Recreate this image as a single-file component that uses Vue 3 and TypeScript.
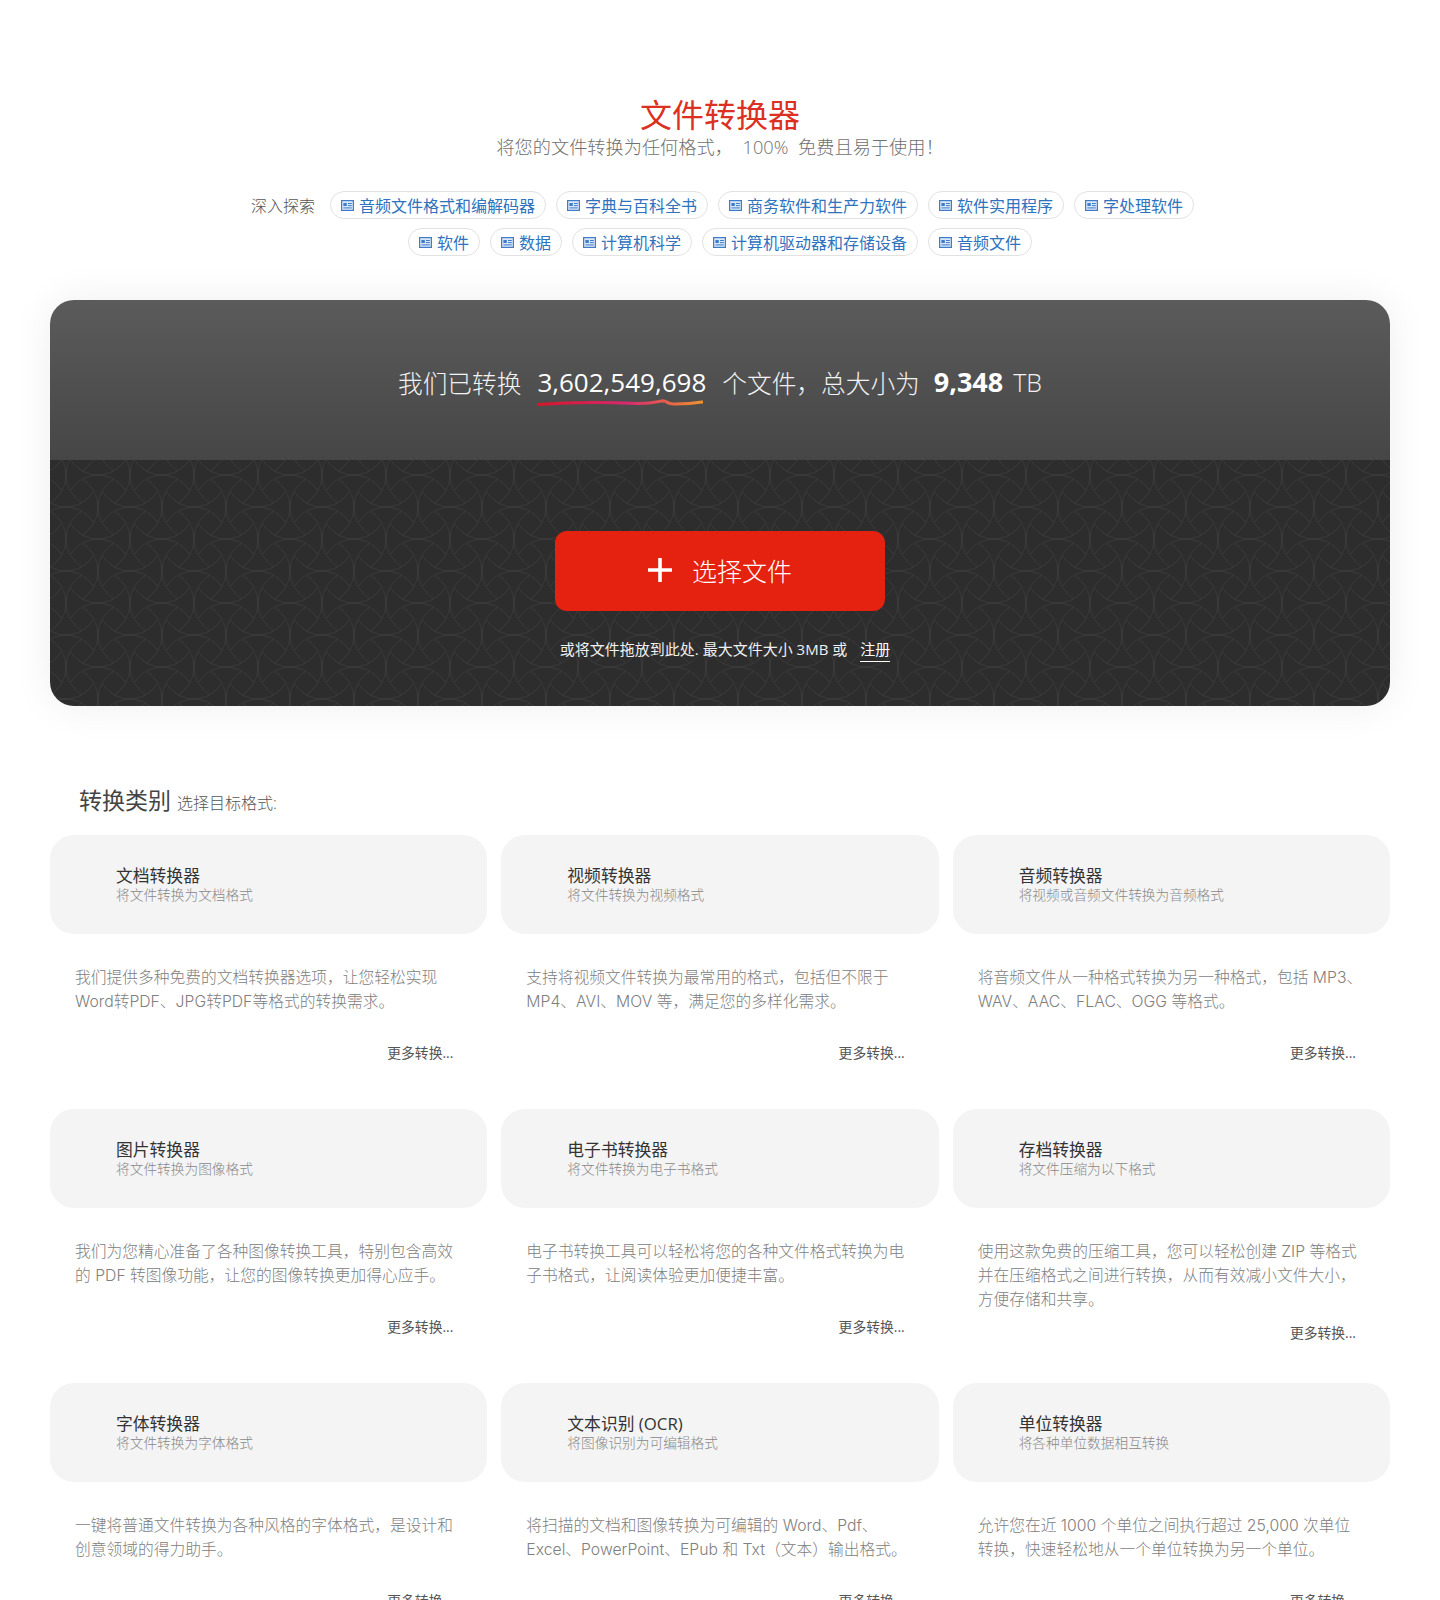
<script setup lang="ts">
interface Category {
  title: string
  sub: string
  lines: string[]
}

const chipRows: string[][] = [
  ['音频文件格式和编解码器', '字典与百科全书', '商务软件和生产力软件', '软件实用程序', '字处理软件'],
  ['软件', '数据', '计算机科学', '计算机驱动器和存储设备', '音频文件'],
]

const categories: Category[] = [
  { title: '文档转换器', sub: '将文件转换为文档格式', lines: ['我们提供多种免费的文档转换器选项，让您轻松实现', 'Word转PDF、JPG转PDF等格式的转换需求。'] },
  { title: '视频转换器', sub: '将文件转换为视频格式', lines: ['支持将视频文件转换为最常用的格式，包括但不限于', 'MP4、AVI、MOV 等，满足您的多样化需求。'] },
  { title: '音频转换器', sub: '将视频或音频文件转换为音频格式', lines: ['将音频文件从一种格式转换为另一种格式，包括 MP3、', 'WAV、AAC、FLAC、OGG 等格式。'] },
  { title: '图片转换器', sub: '将文件转换为图像格式', lines: ['我们为您精心准备了各种图像转换工具，特别包含高效', '的 PDF 转图像功能，让您的图像转换更加得心应手。'] },
  { title: '电子书转换器', sub: '将文件转换为电子书格式', lines: ['电子书转换工具可以轻松将您的各种文件格式转换为电', '子书格式，让阅读体验更加便捷丰富。'] },
  { title: '存档转换器', sub: '将文件压缩为以下格式', lines: ['使用这款免费的压缩工具，您可以轻松创建 ZIP 等格式', '并在压缩格式之间进行转换，从而有效减小文件大小，', '方便存储和共享。'] },
  { title: '字体转换器', sub: '将文件转换为字体格式', lines: ['一键将普通文件转换为各种风格的字体格式，是设计和', '创意领域的得力助手。'] },
  { title: '文本识别 (OCR)', sub: '将图像识别为可编辑格式', lines: ['将扫描的文档和图像转换为可编辑的 Word、Pdf、', 'Excel、PowerPoint、EPub 和 Txt（文本）输出格式。'] },
  { title: '单位转换器', sub: '将各种单位数据相互转换', lines: ['允许您在近 1000 个单位之间执行超过 25,000 次单位', '转换，快速轻松地从一个单位转换为另一个单位。'] },
]
</script>

<template>
  <div class="page">
    <header class="head">
      <h1 class="title">文件转换器</h1>
      <p class="subtitle">将您的文件转换为任何格式， 100% 免费且易于使用！</p>
    </header>

    <nav class="explore">
      <div v-for="(row, r) in chipRows" :key="r" class="chip-row" :class="{ 'chip-row-first': r === 0 }">
        <span v-if="r === 0" class="explore-label">深入探索</span>
        <a v-for="chip in row" :key="chip" class="chip">
          <svg class="chip-icon" viewBox="0 0 13 11" width="13" height="11">
            <rect x="0.6" y="0.6" width="11.8" height="9.8" fill="#dbe7f6" stroke="#3f7cc9" stroke-width="1.2" />
            <rect x="2.4" y="3" width="3.4" height="3" fill="#3f7cc9" />
            <path d="M7 3.5h3.8M7 5.6h3.8M2.4 7.9h8.4" stroke="#3f7cc9" stroke-width="1" fill="none" />
          </svg>
          {{ chip }}
        </a>
      </div>
    </nav>

    <section class="hero">
      <div class="stats">
        <span class="stat-cjk">我们已转换</span>
        <span class="stat-count">
          3,602,549,698
          <svg class="stat-line" viewBox="0 0 166 8" width="166" height="8">
            <defs>
              <linearGradient id="statGrad" x1="0" x2="1" y1="0" y2="0">
                <stop offset="0" stop-color="#d8142a" />
                <stop offset="0.55" stop-color="#d72a70" />
                <stop offset="1" stop-color="#f0922c" />
              </linearGradient>
            </defs>
            <path d="M1 5.5C30 3.5 60 2.8 100 4.6C112 4.8 120 3 126 1.8C130 2 130 4.6 136 5C145 5.2 155 4.6 165 3" fill="none" stroke="url(#statGrad)" stroke-width="3" stroke-linecap="round" />
          </svg>
        </span>
        <span class="stat-cjk">个文件，总大小为</span>
        <b class="stat-size">9,348</b>
        <span class="stat-unit">TB</span>
      </div>
      <div class="drop">
        <button class="pick" type="button">
          <svg class="pick-plus" viewBox="0 0 24 24" width="24" height="24">
            <path d="M12 0v24M0 12h24" stroke="#fff" stroke-width="3.6" fill="none" />
          </svg>
          <span>选择文件</span>
        </button>
        <p class="drop-note">或将文件拖放到此处. 最大文件大小 3MB 或 <a class="signup">注册</a></p>
      </div>
    </section>

    <section class="cats">
      <h2 class="cats-head">转换类别 <small>选择目标格式:</small></h2>
      <div class="grid">
        <article v-for="cat in categories" :key="cat.title" class="cell">
          <div class="card">
            <div class="card-title">{{ cat.title }}</div>
            <div class="card-sub">{{ cat.sub }}</div>
          </div>
          <p class="desc">
            <span v-for="line in cat.lines" :key="line" class="desc-line">{{ line }}</span>
          </p>
          <a class="more">更多转换...</a>
        </article>
      </div>
    </section>
  </div>
</template>

<style>
html, body { margin: 0; background: #fff; }
</style>

<style scoped>
.page {
  height: 1600px;
  overflow: hidden;
  box-sizing: border-box;
  padding: 0 50px;
  background: #fff;
  font-family: "Open Sans", "Noto Sans CJK SC", sans-serif;
  font-weight: 300;
  color: #444;
}
.head { padding-top: 95px; text-align: center; }
.title {
  margin: 0;
  font-size: 32px;
  line-height: 40px;
  font-weight: 400;
  color: #db3022;
}
.subtitle {
  margin: 0;
  font-size: 18.2px;
  line-height: 24px;
  word-spacing: 5px;
  color: #707070;
}
.explore {
  margin-top: 32px;
  display: flex;
  flex-direction: column;
  gap: 9px;
}
.chip-row {
  display: flex;
  justify-content: center;
  align-items: center;
  gap: 10px;
}
.chip-row-first { padding-left: 5px; }
.explore-label {
  font-size: 16px;
  color: #555;
  margin-right: 5px;
}
.chip {
  display: inline-flex;
  align-items: center;
  gap: 5px;
  height: 28px;
  box-sizing: border-box;
  padding: 0 10px;
  border: 1px solid #e2e2e2;
  border-radius: 15px;
  font-size: 16px;
  font-weight: 400;
  color: #2f72bd;
  white-space: nowrap;
}
.chip-icon { flex: none; }
.hero {
  margin-top: 44px;
  height: 406px;
  border-radius: 24px;
  overflow: hidden;
  box-shadow: 0 0 40px rgba(0, 0, 0, 0.07);
  display: flex;
  flex-direction: column;
}
.stats {
  height: 160px;
  flex: none;
  box-sizing: border-box;
  padding-top: 3px;
  background: linear-gradient(#5b5b5b, #464646);
  display: flex;
  align-items: center;
  justify-content: center;
  color: #f2f2f2;
  white-space: nowrap;
}
.stat-cjk { font-size: 24.7px; }
.stat-count {
  position: relative;
  font-size: 26px;
  font-weight: 400;
  margin: 0 16px;
  color: #fff;
}
.stat-line { position: absolute; left: 0; bottom: -7px; }
.stat-size {
  font-size: 27px;
  font-weight: 700;
  margin-left: 14px;
  color: #fff;
}
.stat-unit { font-size: 25px; margin-left: 10px; }
.drop {
  flex: 1;
  background-color: #2d2d2d;
  background-image: url("data:image/svg+xml,%3Csvg xmlns='http://www.w3.org/2000/svg' xmlns:xlink='http://www.w3.org/1999/xlink' width='64' height='64' fill='none' stroke='rgba(255,255,255,.055)' stroke-width='1'%3E%3Cdefs%3E%3Cpath id='a' d='M17-27.1A32 32 0 0 1 17 27.1M-17-27.1A32 32 0 0 0-17 27.1'/%3E%3Cpath id='b' d='M-27.1-17A32 32 0 0 1 27.1-17M-27.1 17A32 32 0 0 0 27.1 17'/%3E%3C/defs%3E%3Cuse href='%23a' x='48' y='15'/%3E%3Cuse href='%23a' x='-16' y='15'/%3E%3Cuse href='%23a' x='16' y='47'/%3E%3Cuse href='%23a' x='80' y='47'/%3E%3Cuse href='%23a' x='48' y='79'/%3E%3Cuse href='%23a' x='-16' y='79'/%3E%3Cuse href='%23a' x='16' y='-17'/%3E%3Cuse href='%23a' x='80' y='-17'/%3E%3Cuse href='%23b' x='48' y='47'/%3E%3Cuse href='%23b' x='-16' y='47'/%3E%3Cuse href='%23b' x='16' y='15'/%3E%3Cuse href='%23b' x='80' y='15'/%3E%3Cuse href='%23b' x='48' y='-17'/%3E%3Cuse href='%23b' x='-16' y='-17'/%3E%3Cuse href='%23b' x='16' y='79'/%3E%3Cuse href='%23b' x='80' y='79'/%3E%3C/svg%3E");
  display: flex;
  flex-direction: column;
  align-items: center;
  padding-top: 71px;
  box-sizing: border-box;
}
.pick {
  width: 330px;
  height: 80px;
  border: 0;
  border-radius: 12px;
  padding: 0 0 2px;
  background: #e52110;
  display: flex;
  align-items: center;
  justify-content: center;
  gap: 20px;
  color: #fff;
  font-family: inherit;
  font-weight: 300;
  font-size: 25px;
}
.pick-plus { flex: none; }
.drop-note {
  margin: 28px 0 0 10px;
  font-size: 15px;
  line-height: 20px;
  font-weight: 400;
  color: #f0f0f0;
  white-space: pre-wrap;
}
.signup {
  margin-left: 9px;
  color: #fff;
  border-bottom: 1px solid #fff;
  padding-bottom: 2px;
}
.cats { margin-top: 78px; }
.cats-head {
  margin: 0 0 15px 29px;
  font-size: 23px;
  line-height: 33px;
  font-weight: 400;
  color: #444;
}
.cats-head small {
  font-size: 16px;
  font-weight: 300;
  color: #555;
}
.grid {
  display: grid;
  grid-template-columns: repeat(3, 1fr);
  grid-auto-rows: 234px;
  column-gap: 14px;
  row-gap: 40px;
}
.cell { display: flex; flex-direction: column; }
.card {
  height: 99px;
  flex: none;
  box-sizing: border-box;
  padding-left: 66px;
  background: #f4f4f4;
  border-radius: 24px;
  display: flex;
  flex-direction: column;
  justify-content: center;
}
.card-title {
  font-size: 16.8px;
  line-height: 20px;
  font-weight: 400;
  color: #333;
}
.card-sub {
  font-size: 13.7px;
  line-height: 18px;
  color: #888;
}
.desc {
  margin: 32px 0 0;
  padding: 0 0 0 25px;
  min-height: 66px;
  font-family: "Inter", "Noto Sans CJK SC", sans-serif;
  font-size: 15.75px;
  line-height: 24px;
  color: #808080;
  white-space: nowrap;
}
.desc-line { display: block; }
.more {
  margin: 11px 34px 0 0;
  align-self: flex-end;
  font-size: 13.8px;
  line-height: 20px;
  font-weight: 400;
  color: #555;
}
</style>
